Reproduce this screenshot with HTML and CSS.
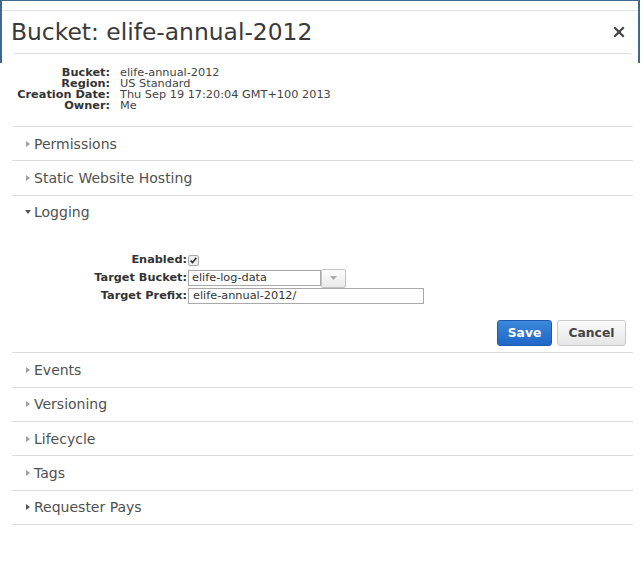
FILE: index.html
```html
<!DOCTYPE html>
<html>
<head>
<meta charset="utf-8">
<link rel="stylesheet" href="styles.css">
</head>
<body>
<div class="modal">
  <div class="topline"></div>
  <div class="titlebar">
    <h1 class="title">Bucket: elife-annual-2012</h1>
    <span class="close"><svg width="12" height="12" viewBox="0 0 12 12"><path d="M1.2 1.2 L10.8 10.8 M10.8 1.2 L1.2 10.8" stroke="#444" stroke-width="2.2" fill="none"/></svg></span>
  </div>
  <div class="panel">
    <div class="info">
      <span class="k">Bucket:</span><span class="v">elife-annual-2012</span>
      <span class="k">Region:</span><span class="v">US Standard</span>
      <span class="k">Creation Date:</span><span class="v">Thu Sep 19 17:20:04 GMT+100 2013</span>
      <span class="k">Owner:</span><span class="v">Me</span>
    </div>
    <div class="section"><div class="sec-head"><span class="caret"></span>Permissions</div></div>
    <div class="section"><div class="sec-head"><span class="caret"></span>Static Website Hosting</div></div>
    <div class="section">
      <div class="sec-head"><span class="caret down"></span>Logging</div>
      <div class="form">
        <span class="lbl">Enabled:</span>
        <span class="fld"><svg class="cb" width="11" height="11" viewBox="0 0 11 11"><rect x="0.5" y="0.5" width="10" height="10" rx="1.5" fill="#eee" stroke="#a8a8a8"/><path d="M2.6 5.6 L4.5 7.6 L8.4 2.8" stroke="#333" stroke-width="1.6" fill="none"/></svg></span>
        <span class="lbl">Target Bucket:</span>
        <span class="fld"><span class="input bucket">elife-log-data</span><span class="ddbtn"><svg width="7" height="4" viewBox="0 0 7 4"><path d="M0 0 L7 0 L3.5 4 Z" fill="#aaa"/></svg></span></span>
        <span class="lbl">Target Prefix:</span>
        <span class="fld"><span class="input prefix">elife-annual-2012/</span></span>
      </div>
      <div class="actions">
        <button class="btn save">Save</button>
        <button class="btn cancel">Cancel</button>
      </div>
    </div>
    <div class="section"><div class="sec-head"><span class="caret"></span>Events</div></div>
    <div class="section"><div class="sec-head"><span class="caret"></span>Versioning</div></div>
    <div class="section"><div class="sec-head"><span class="caret"></span>Lifecycle</div></div>
    <div class="section"><div class="sec-head"><span class="caret"></span>Tags</div></div>
    <div class="section"><div class="sec-head"><span class="caret dark"></span>Requester Pays</div></div>
  </div>
</div>
</body>
</html>
```
FILE: styles.css
```css
html, body {
  margin: 0;
  padding: 0;
  background: #fff;
}
body {
  font-family: "DejaVu Sans", sans-serif;
  color: #444;
}
.modal {
  width: 640px;
  border-top: 1px solid #41698c;
  background:
    linear-gradient(#41698c, #41698c) left top / 2px 62px no-repeat,
    linear-gradient(#41698c, #41698c) right top / 2px 62px no-repeat;
}
.topline {
  margin: 9px 2px 0 2px;
  border-top: 1px solid #e2e2e2;
}
.titlebar {
  height: 42px;
  display: flex;
  align-items: center;
  justify-content: space-between;
  padding: 0 15px 0 11px;
}
.title {
  margin: 0;
  font-weight: normal;
  font-size: 23.4px;
  line-height: 28px;
  color: #3a3a3a;
}
.close {
  display: flex;
  width: 12px;
  height: 12px;
}
.panel {
  margin: 0 7px 0 12px;
}
.info {
  border: 1px solid #ddd;
  border-left-color: transparent;
  border-right-color: transparent;
  border-radius: 4px 4px 0 0;
  padding: 13px 0 15px 0;
  display: grid;
  grid-template-columns: 97px auto;
  column-gap: 10px;
  font-size: 11.3px;
  line-height: 11px;
}
.info .k {
  font-weight: bold;
  text-align: right;
  color: #333;
}
.info .v {
  color: #444;
}
.section {
  border-bottom: 1px solid #ddd;
}
.sec-head {
  height: 33.4px;
  display: flex;
  align-items: center;
  padding-left: 14px;
  font-size: 14px;
  color: #505050;
}
.caret {
  width: 0;
  height: 0;
  border-top: 3px solid transparent;
  border-bottom: 3px solid transparent;
  border-left: 4px solid #a0a0a0;
  margin-right: 4px;
}
.caret.dark {
  border-left-color: #555;
}
.caret.down {
  border-left: 3px solid transparent;
  border-right: 3px solid transparent;
  border-top: 4px solid #555;
  border-bottom: 0;
  margin-left: -1px;
  margin-right: 3px;
}
.form {
  padding-top: 23px;
  display: grid;
  grid-template-columns: 175px auto;
  grid-template-rows: 16px 20px 16px;
  column-gap: 1px;
  font-size: 11.3px;
}
.form .lbl {
  align-self: center;
  text-align: right;
  font-weight: bold;
  color: #333;
  line-height: 12px;
}
.form .fld {
  display: flex;
  align-items: center;
}
.cb {
  display: block;
}
.input {
  box-sizing: border-box;
  height: 16px;
  border: 1px solid #a8a8a8;
  background: #fff;
  padding-left: 3px;
  font-size: 11.3px;
  line-height: 14px;
  color: #333;
}
.input.bucket {
  width: 133px;
}
.input.prefix {
  width: 236px;
  padding-left: 4px;
}
.ddbtn {
  box-sizing: border-box;
  width: 25px;
  height: 19px;
  border: 1px solid #c4c4c4;
  border-radius: 2px;
  background: linear-gradient(#fdfdfd, #e9e9e9);
  display: flex;
  align-items: center;
  justify-content: center;
}
.actions {
  display: flex;
  justify-content: flex-end;
  gap: 5px;
  padding: 16px 7px 6px 0;
}
.btn {
  box-sizing: border-box;
  height: 26px;
  border-radius: 3px;
  font-family: "DejaVu Sans", sans-serif;
  font-weight: bold;
  font-size: 12.3px;
  padding: 0;
}
.save {
  width: 55px;
  color: #fff;
  border: 1px solid #1b5cb3;
  background: linear-gradient(#3c88da, #1f66c7);
}
.cancel {
  width: 69px;
  color: #444;
  border: 1px solid #c9c9c9;
  background: linear-gradient(#fbfbfb, #e5e5e5);
}
```
